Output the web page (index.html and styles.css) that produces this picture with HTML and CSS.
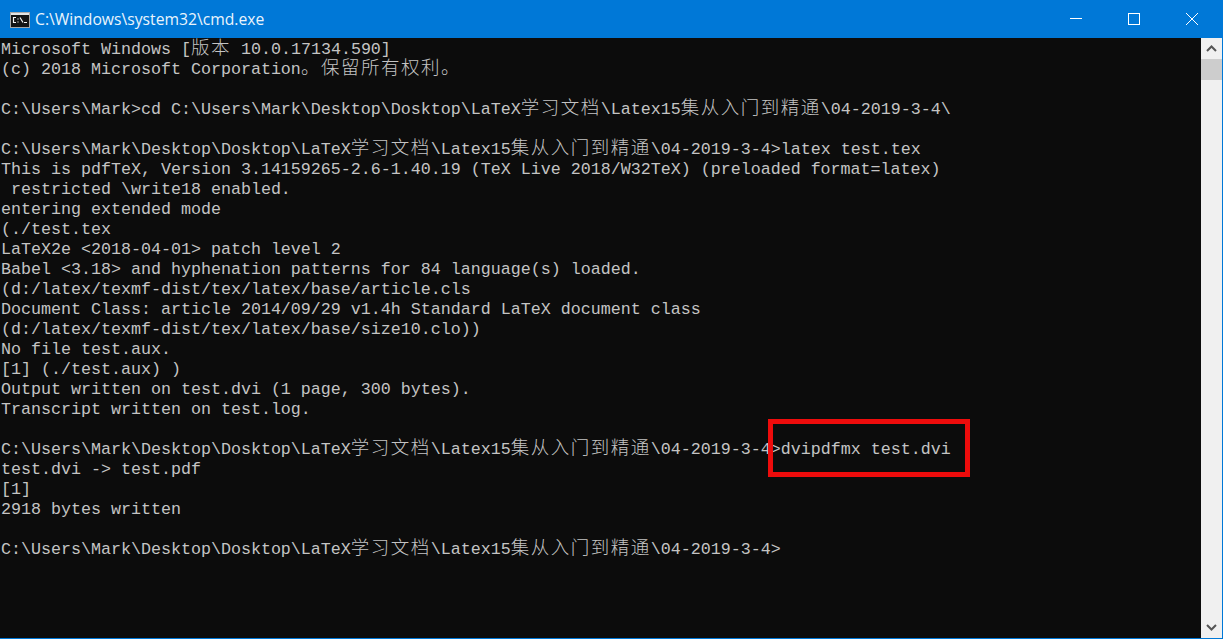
FILE: index.html
```html
<!DOCTYPE html>
<html lang="zh">
<head>
<meta charset="utf-8">
<title>cmd.exe</title>
<link rel="stylesheet" href="styles.css">
</head>
<body>
<div class="window">
  <header class="titlebar">
    <svg class="app-icon" width="20" height="16" viewBox="0 0 20 16">
      <rect x="0.500" y="0.500" width="19" height="15" fill="#141414" stroke="#a8a8a8"/>
      <rect x="1" y="1" width="18" height="2" fill="#e4e4e4"/>
      <path d="M6 5.500H3.500V10.500H6M8 6.500v1M8 9.500v1M10 5.500l3 5M14 10.500h3" stroke="#f4f4f4" stroke-width="1.200" fill="none"/>
    </svg>
    <span class="title">C:\Windows\system32\cmd.exe</span>
    <div class="controls">
      <button class="control"><svg width="12" height="12" viewBox="0 0 12 12"><path d="M0 5.500h12" stroke="#fff"/></svg></button>
      <button class="control"><svg width="12" height="12" viewBox="0 0 12 12"><rect x="0.500" y="0.500" width="11" height="11" fill="none" stroke="#fff"/></svg></button>
      <button class="control"><svg width="12" height="12" viewBox="0 0 12 12"><path d="M0 0l12 12M12 0L0 12" stroke="#fff"/></svg></button>
    </div>
  </header>
  <div class="content">
    <main class="console"><pre class="text">Microsoft Windows [<span class="cjk">版本</span> 10.0.17134.590]
(c) 2018 Microsoft Corporation<span class="cjk">。保留所有权利。</span>

C:\Users\Mark&gt;cd C:\Users\Mark\Desktop\Dosktop\LaTeX<span class="cjk">学习文档</span>\Latex15<span class="cjk">集从入门到精通</span>\04-2019-3-4\

C:\Users\Mark\Desktop\Dosktop\LaTeX<span class="cjk">学习文档</span>\Latex15<span class="cjk">集从入门到精通</span>\04-2019-3-4&gt;latex test.tex
This is pdfTeX, Version 3.14159265-2.6-1.40.19 (TeX Live 2018/W32TeX) (preloaded format=latex)
 restricted \write18 enabled.
entering extended mode
(./test.tex
LaTeX2e &lt;2018-04-01&gt; patch level 2
Babel &lt;3.18&gt; and hyphenation patterns for 84 language(s) loaded.
(d:/latex/texmf-dist/tex/latex/base/article.cls
Document Class: article 2014/09/29 v1.4h Standard LaTeX document class
(d:/latex/texmf-dist/tex/latex/base/size10.clo))
No file test.aux.
[1] (./test.aux) )
Output written on test.dvi (1 page, 300 bytes).
Transcript written on test.log.

C:\Users\Mark\Desktop\Dosktop\LaTeX<span class="cjk">学习文档</span>\Latex15<span class="cjk">集从入门到精通</span>\04-2019-3-4&gt;dvipdfmx test.dvi
test.dvi -&gt; test.pdf
[1]
2918 bytes written

C:\Users\Mark\Desktop\Dosktop\LaTeX<span class="cjk">学习文档</span>\Latex15<span class="cjk">集从入门到精通</span>\04-2019-3-4&gt;</pre></main>
    <aside class="scrollbar">
      <div class="arrow"><svg width="11" height="7" viewBox="0 0 11 7"><path d="M1 6l4.500-4.500L10 6" fill="none" stroke="#555" stroke-width="2"/></svg></div>
      <div class="thumb"></div>
      <div class="track"></div>
      <div class="arrow"><svg width="11" height="7" viewBox="0 0 11 7"><path d="M1 1l4.500 4.500L10 1" fill="none" stroke="#555" stroke-width="2"/></svg></div>
    </aside>
  </div>
  <div class="highlight"></div>
</div>
</body>
</html>
```
FILE: styles.css
```css
* { box-sizing: border-box; }
html, body { margin: 0; height: 100%; overflow: hidden; }
.window {
  position: relative;
  width: 1223px;
  height: 639px;
  display: flex;
  flex-direction: column;
  background: #0078d7;
  border-right: 1px solid #0078d7;
  border-bottom: 1px solid #0078d7;
}
.titlebar {
  height: 38px;
  display: flex;
  align-items: center;
  padding-left: 10px;
  background: #0078d7;
  color: #fff;
  flex: none;
}
.app-icon { flex: none; margin-top: 1px; }
.title {
  margin-left: 5px;
  font: 15.700px/20px "Open Sans", "Noto Sans", sans-serif;
  color: #eaf4fc;
}
.controls { margin-left: auto; display: flex; height: 100%; padding-right: 1px; }
.control {
  width: 58px;
  height: 100%;
  padding: 0;
  border: 0;
  background: transparent;
  display: flex;
  align-items: center;
  justify-content: center;
}
.content { flex: 1; display: flex; min-height: 0; }
.console { flex: 1; background: #0c0c0c; overflow: hidden; padding: 2px 0 0 1px; }
.text {
  margin: 0;
  font: 16.667px/20px "Liberation Mono", monospace;
  color: #c4c4c4;
  white-space: pre;
}
.cjk {
  font-family: "Noto Sans CJK SC", sans-serif;
  font-size: 18.500px;
  letter-spacing: 1.500px;
  line-height: 0;
  font-weight: 300;
}
.scrollbar {
  width: 21px;
  flex: none;
  background: #f0f0f0;
  display: flex;
  flex-direction: column;
}
.arrow {
  height: 21px;
  flex: none;
  display: flex;
  align-items: center;
  justify-content: center;
}
.thumb { height: 21px; flex: none; background: #cdcdcd; }
.track { flex: 1; }
.highlight {
  position: absolute;
  left: 768px;
  top: 419px;
  width: 202px;
  height: 58px;
  border: 5px solid #ee0c0c;
}
```
